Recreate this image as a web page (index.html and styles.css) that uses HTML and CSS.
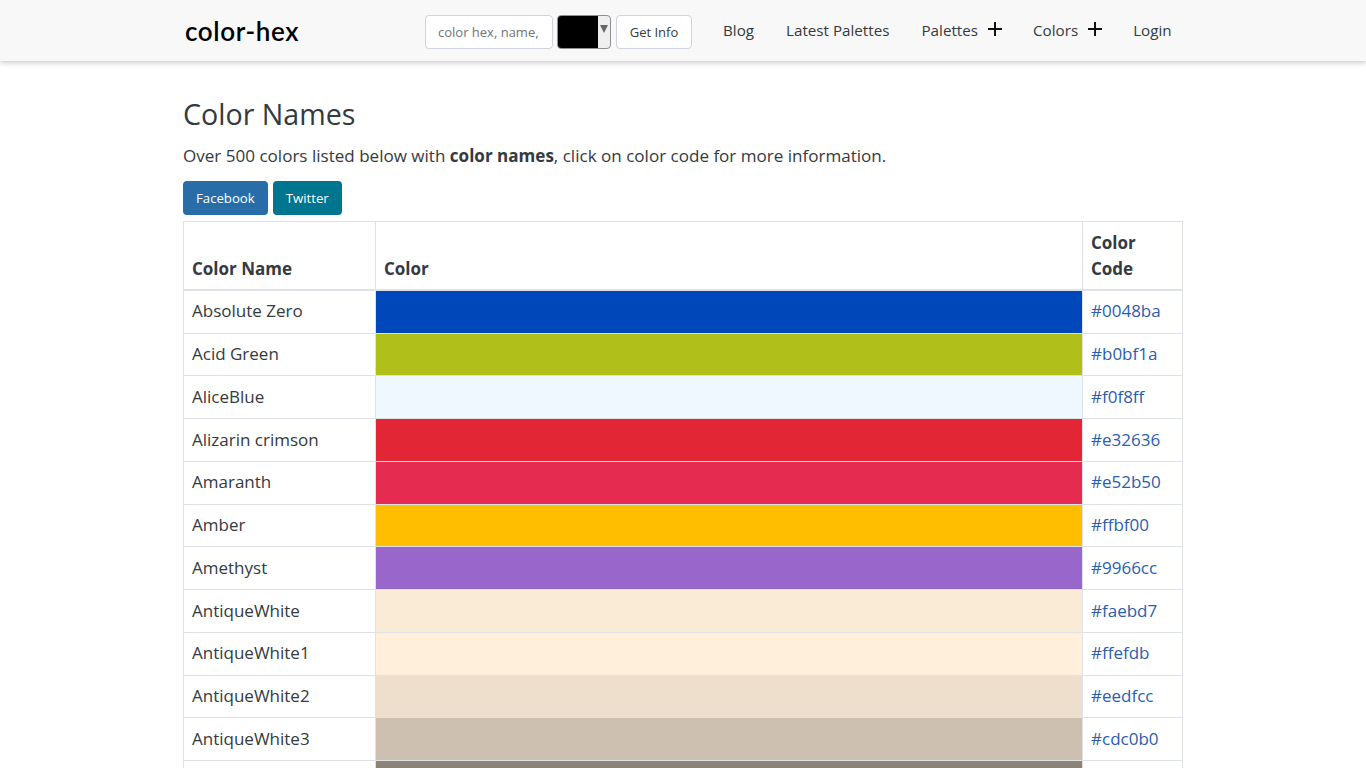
FILE: index.html
```html
<!DOCTYPE html>
<html lang="en">
<head>
    <meta charset="UTF-8">
    <meta name="viewport" content="width=device-width, initial-scale=1.0">
    <title>Color Names</title>
    <link rel="stylesheet" href="styles.css">
</head>
<body>

    <nav class="navbar">
        <div class="navbar-inner">
            <a class="brand" href="#">color-hex</a>
            <form class="search">
                <input class="search-input" type="text" placeholder="color hex, name, rgb">
                <div class="color-pick"><span class="color-pick-swatch"></span><span class="color-pick-arrow"></span></div>
                <button class="search-btn" type="button">Get Info</button>
            </form>
            <ul class="nav-links">
                <li><a href="#">Blog</a></li>
                <li><a href="#">Latest Palettes</a></li>
                <li><a href="#">Palettes<svg class="plus" viewBox="0 0 14 14"><path d="M7 0v14M0 7h14"/></svg></a></li>
                <li><a href="#">Colors<svg class="plus" viewBox="0 0 14 14"><path d="M7 0v14M0 7h14"/></svg></a></li>
                <li><a href="#">Login</a></li>
            </ul>
        </div>
    </nav>

    <main class="container">
        <h1>Color Names</h1>
        <p class="lead">Over 500 colors listed below with <strong>color names</strong>, click on color code for more information.</p>
        <div class="share">
            <a class="share-btn facebook" href="#">Facebook</a>
            <a class="share-btn twitter" href="#">Twitter</a>
        </div>

        <table class="color-table">
            <thead>
                <tr>
                    <th class="col-name">Color Name</th>
                    <th>Color</th>
                    <th class="col-code">Color Code</th>
                </tr>
            </thead>
            <tbody>
                <tr><td>Absolute Zero</td><td class="swatch c-0048ba"></td><td><a href="#">#0048ba</a></td></tr>
                <tr><td>Acid Green</td><td class="swatch c-b0bf1a"></td><td><a href="#">#b0bf1a</a></td></tr>
                <tr><td>AliceBlue</td><td class="swatch c-f0f8ff"></td><td><a href="#">#f0f8ff</a></td></tr>
                <tr><td>Alizarin crimson</td><td class="swatch c-e32636"></td><td><a href="#">#e32636</a></td></tr>
                <tr><td>Amaranth</td><td class="swatch c-e52b50"></td><td><a href="#">#e52b50</a></td></tr>
                <tr><td>Amber</td><td class="swatch c-ffbf00"></td><td><a href="#">#ffbf00</a></td></tr>
                <tr><td>Amethyst</td><td class="swatch c-9966cc"></td><td><a href="#">#9966cc</a></td></tr>
                <tr><td>AntiqueWhite</td><td class="swatch c-faebd7"></td><td><a href="#">#faebd7</a></td></tr>
                <tr><td>AntiqueWhite1</td><td class="swatch c-ffefdb"></td><td><a href="#">#ffefdb</a></td></tr>
                <tr><td>AntiqueWhite2</td><td class="swatch c-eedfcc"></td><td><a href="#">#eedfcc</a></td></tr>
                <tr><td>AntiqueWhite3</td><td class="swatch c-cdc0b0"></td><td><a href="#">#cdc0b0</a></td></tr>
                <tr><td>AntiqueWhite4</td><td class="swatch c-8b8378"></td><td><a href="#">#8b8378</a></td></tr>
            </tbody>
        </table>
    </main>

</body>
</html>
```
FILE: styles.css
```css
* {
    box-sizing: border-box;
}

body {
    margin: 0;
    font-family: 'Open Sans', 'Noto Sans', sans-serif;
    font-size: 17px;
    color: #343a40;
    background: #fff;
}

a {
    text-decoration: none;
}


.navbar {
    height: 61px;
    background: #f8f8f9;
    box-shadow: 0 2px 5px rgba(0, 0, 0, 0.2);
}

.navbar-inner {
    width: 1000px;
    height: 61px;
    margin: 0 auto;
    display: flex;
    align-items: center;
}

.brand {
    width: 240px;
    margin-left: 2px;
    flex: none;
    font-family: 'Lato', sans-serif;
    font-size: 26px;
    font-weight: 600;
    letter-spacing: 0.6px;
    color: #000;
}

.search {
    display: flex;
    align-items: center;
    height: 34px;
    margin-top: 3px;
}

.search-input {
    width: 128px;
    height: 34px;
    padding: 0 12px;
    border: 1px solid #ced4da;
    border-radius: 4px;
    font-family: inherit;
    font-size: 13px;
    color: #495057;
    background: #fff;
}

.search-input::placeholder {
    color: #6c757d;
}

.color-pick {
    width: 54px;
    height: 34px;
    margin-left: 4px;
    display: flex;
    border: 1px solid #8f8f8f;
    border-radius: 4px;
    overflow: hidden;
    background: #efefef;
}

.color-pick-swatch {
    width: 40px;
    background: #000;
}

.color-pick-arrow {
    width: 0;
    height: 0;
    margin: 9px 0 0 2px;
    border-left: 4px solid transparent;
    border-right: 4px solid transparent;
    border-top: 8px solid #666;
}

.search-btn {
    width: 76px;
    height: 34px;
    margin-left: 5px;
    padding: 0;
    border: 1px solid #ced4da;
    border-radius: 4px;
    background: #fff;
    font-family: inherit;
    font-size: 13px;
    color: #343a40;
}

.nav-links {
    list-style: none;
    display: flex;
    align-items: center;
    margin: 0 0 2px 15px;
    padding: 0;
    white-space: nowrap;
}

.nav-links a {
    display: flex;
    align-items: center;
    padding: 0 16px;
    font-size: 15.2px;
    color: #343a40;
}

.plus {
    width: 14px;
    height: 14px;
    margin: -2px -1px 0 10px;
    fill: none;
    stroke: #111;
    stroke-width: 2;
}


.container {
    width: 1000px;
    margin: 0 auto;
    padding-top: 35px;
}

h1 {
    margin: 0 0 12px;
    font-size: 28.6px;
    font-weight: 400;
    line-height: 36px;
    color: #343a40;
}

.lead {
    margin: 0 0 13px;
    font-size: 17.06px;
    line-height: 24px;
}

.share {
    display: flex;
    gap: 5px;
    margin-bottom: 6px;
}

.share-btn {
    height: 34px;
    padding: 0 13px;
    border-radius: 4px;
    font-size: 13.2px;
    line-height: 34px;
    color: #fff;
}

.facebook {
    background: #286da8;
}

.twitter {
    background: #00758f;
}


.color-table {
    width: 1000px;
    table-layout: fixed;
    border-collapse: collapse;
    font-size: 17px;
}

.color-table th,
.color-table td {
    padding: 7.5px 8px 8.5px;
    border: 1px solid #dee2e6;
    line-height: 25.75px;
    text-align: left;
}

.color-table th {
    vertical-align: bottom;
    padding: 8px 8px 7.4px;
    border-bottom-width: 2px;
    font-weight: 700;
}

.col-name {
    width: 192px;
}

.col-code {
    width: 100px;
}

.color-table td a {
    color: #2a5db0;
}

.color-table .swatch {
    padding: 0;
}

.c-0048ba { background: #0048ba; }
.c-b0bf1a { background: #b0bf1a; }
.c-f0f8ff { background: #f0f8ff; }
.c-e32636 { background: #e32636; }
.c-e52b50 { background: #e52b50; }
.c-ffbf00 { background: #ffbf00; }
.c-9966cc { background: #9966cc; }
.c-faebd7 { background: #faebd7; }
.c-ffefdb { background: #ffefdb; }
.c-eedfcc { background: #eedfcc; }
.c-cdc0b0 { background: #cdc0b0; }
.c-8b8378 { background: #8b8378; }
```
